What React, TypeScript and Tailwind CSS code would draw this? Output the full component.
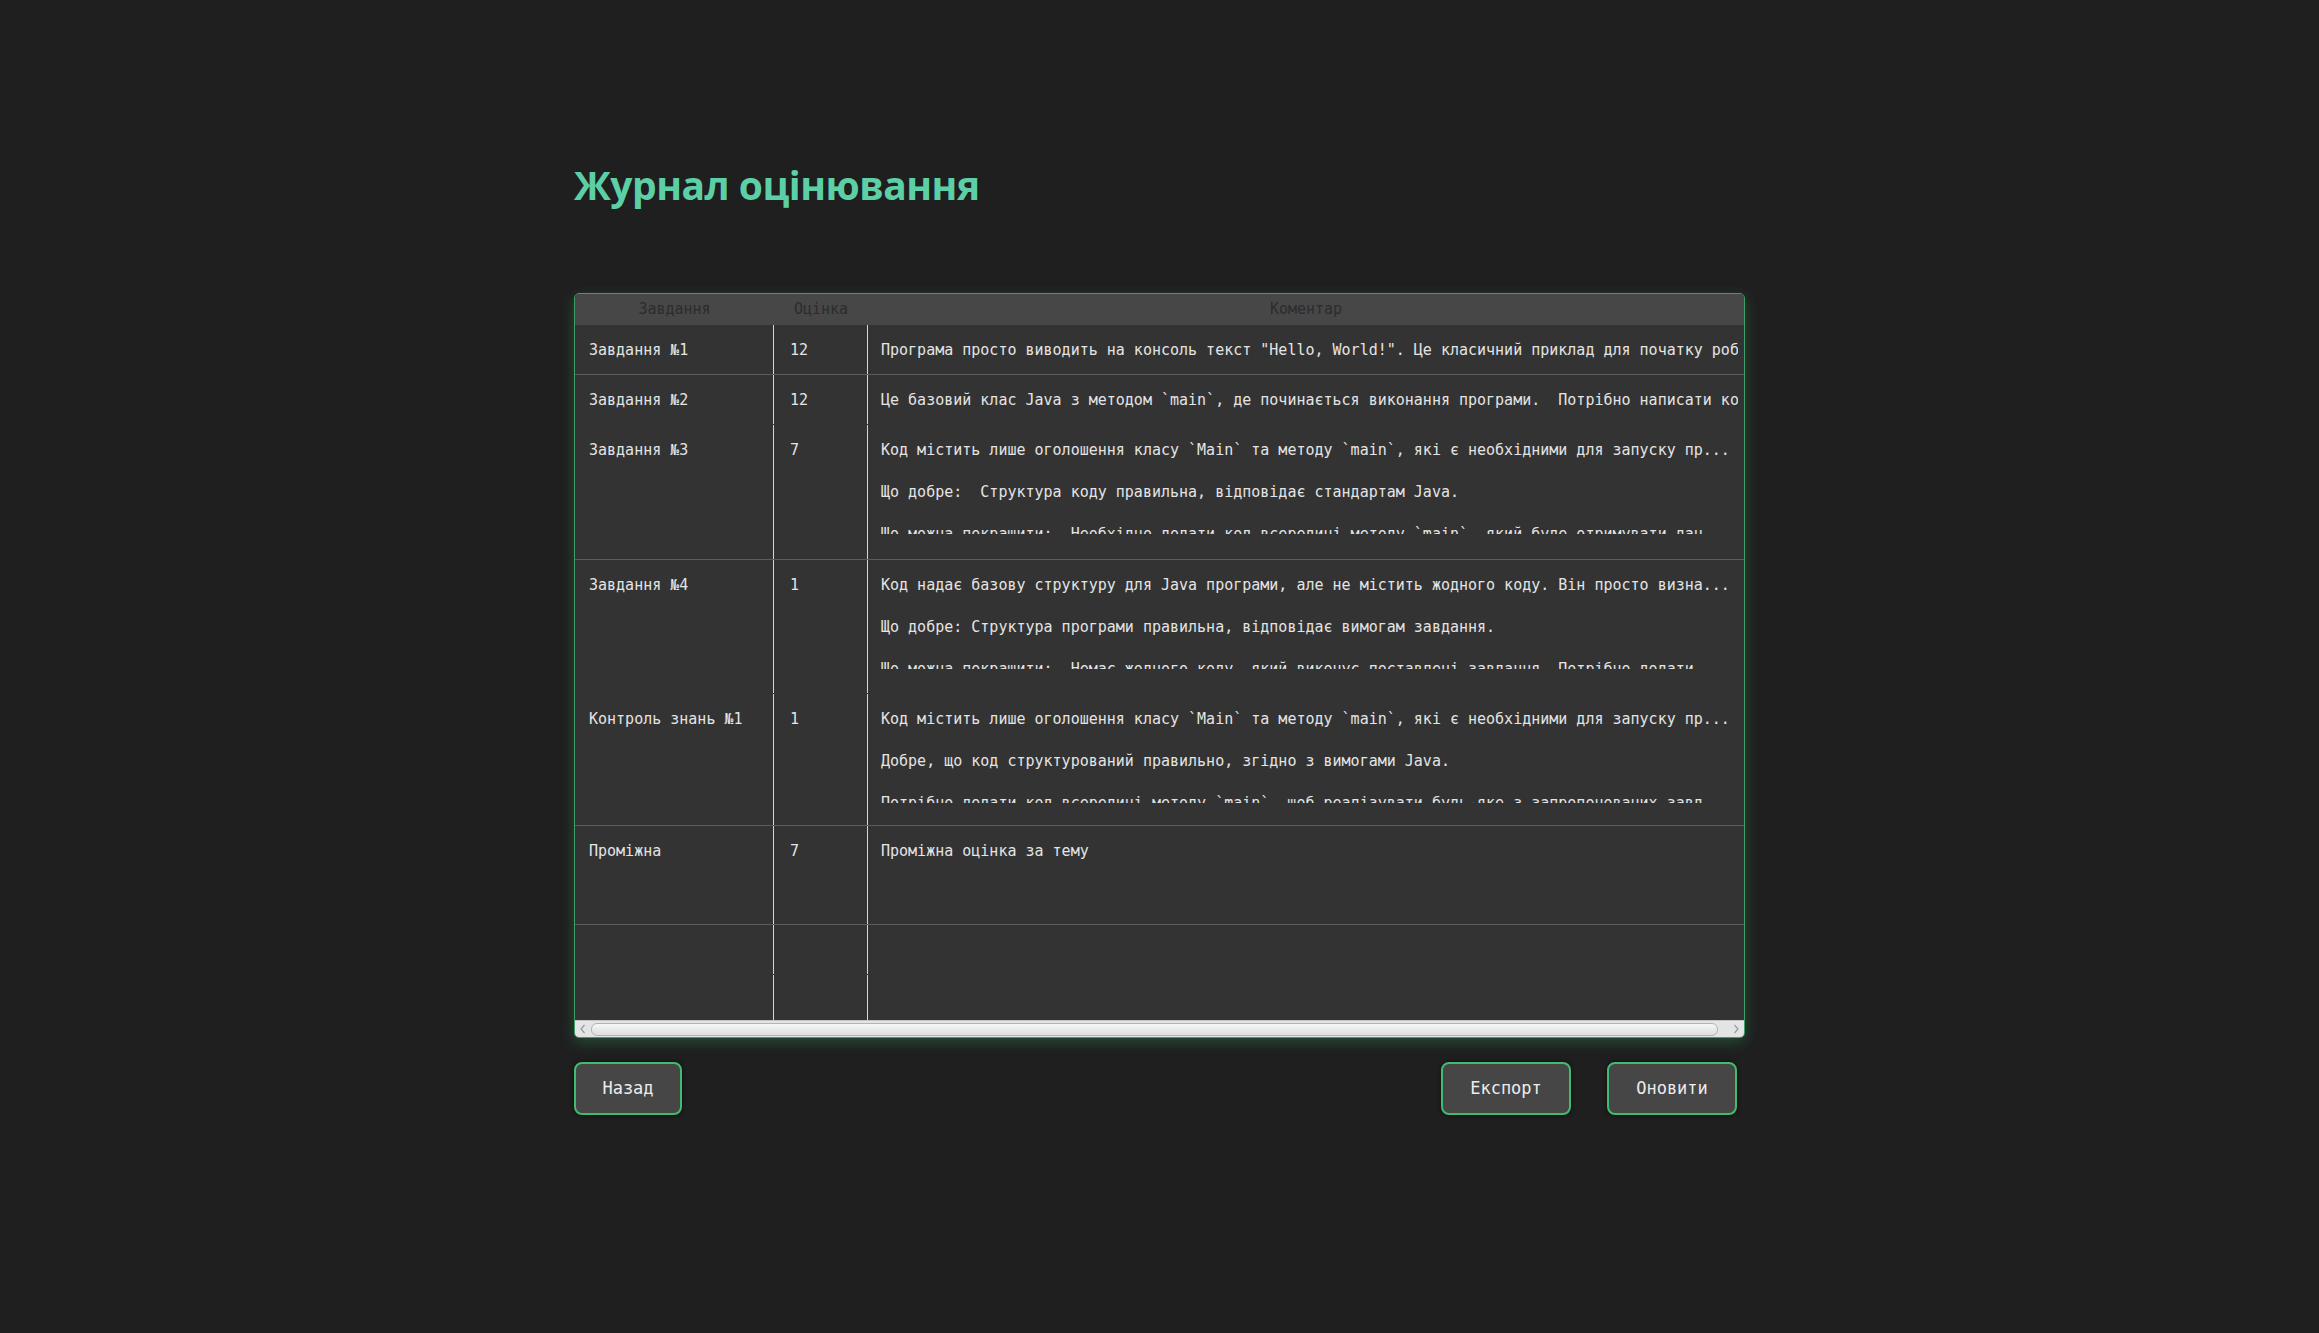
import React from 'react';

type Row = {
  name: string;
  score: string;
  lines: string[];
  height: string;
  separator: boolean;
};

const rows: Row[] = [
  {
    name: 'Завдання №1',
    score: '12',
    lines: ['Програма просто виводить на консоль текст "Hello, World!". Це класичний приклад для початку роботи з Java.'],
    height: 'h-[50px]',
    separator: true,
  },
  {
    name: 'Завдання №2',
    score: '12',
    lines: ['Це базовий клас Java з методом `main`, де починається виконання програми.  Потрібно написати код для завдань.'],
    height: 'h-[50px]',
    separator: false,
  },
  {
    name: 'Завдання №3',
    score: '7',
    lines: [
      'Код містить лише оголошення класу `Main` та методу `main`, які є необхідними для запуску пр...',
      'Що добре:  Структура коду правильна, відповідає стандартам Java.',
      'Що можна покращити:  Необхідно додати код всередині методу `main`, який буде отримувати дан...',
    ],
    height: 'h-[135px]',
    separator: true,
  },
  {
    name: 'Завдання №4',
    score: '1',
    lines: [
      'Код надає базову структуру для Java програми, але не містить жодного коду. Він просто визна...',
      'Що добре: Структура програми правильна, відповідає вимогам завдання.',
      'Що можна покращити:  Немає жодного коду, який виконує поставлені завдання. Потрібно додати ...',
    ],
    height: 'h-[134px]',
    separator: false,
  },
  {
    name: 'Контроль знань №1',
    score: '1',
    lines: [
      'Код містить лише оголошення класу `Main` та методу `main`, які є необхідними для запуску пр...',
      'Добре, що код структурований правильно, згідно з вимогами Java.',
      'Потрібно додати код всередині методу `main`, щоб реалізувати будь-яке з запропонованих завд...',
    ],
    height: 'h-[132px]',
    separator: true,
  },
  {
    name: 'Проміжна',
    score: '7',
    lines: ['Проміжна оцінка за тему'],
    height: 'h-[99px]',
    separator: true,
  },
  { name: '', score: '', lines: [], height: 'h-[50px]', separator: false },
  { name: '', score: '', lines: [], height: 'h-[50px]', separator: false },
];

function TableRow({ row }: { row: Row }) {
  return (
    <div
      className={`flex ${row.height} border-b ${row.separator ? 'border-[#5c5c5c]' : 'border-transparent'}`}
    >
      <div className="w-[199px] shrink-0 border-r border-[#d6d6d6] pl-[14px] pt-[15px]">{row.name}</div>
      <div className="w-[94px] shrink-0 border-r border-[#d6d6d6] pl-[16px] pt-[15px]">{row.score}</div>
      <div className="mr-[6px] min-w-0 flex-1 overflow-hidden pl-[13px] pt-[15px]">
        <div className="h-[94px] overflow-hidden whitespace-pre">
          {row.lines.map((line, i) => (
            <div key={i} className={i > 0 ? 'mt-[21px]' : ''}>
              {line}
            </div>
          ))}
        </div>
      </div>
    </div>
  );
}

function Scrollbar() {
  return (
    <div className="flex h-[17px] items-center border-t border-[#c4c4c4] bg-[#e4e4e4] px-[3px]">
      <svg width="10" height="12" viewBox="0 0 10 12" className="shrink-0">
        <path d="M6.5 2 L3 6 L6.5 10" fill="none" stroke="#9a9a9a" strokeWidth="1.2" />
      </svg>
      <div className="mx-[3px] h-[13px] flex-1 rounded-[6px] border border-[#b3b3b3] bg-gradient-to-b from-[#f7f7f7] to-[#dedede]" />
      <div className="w-[10px] shrink-0" />
      <svg width="10" height="12" viewBox="0 0 10 12" className="shrink-0">
        <path d="M3.5 2 L7 6 L3.5 10" fill="none" stroke="#9a9a9a" strokeWidth="1.2" />
      </svg>
    </div>
  );
}

function ActionButton({ label, width }: { label: string; width: string }) {
  return (
    <button
      className={`${width} h-[53px] rounded-[8px] border-2 border-[#3fbb74] bg-[#464646] text-[17px] text-[#ececec] shadow-[0_0_4px_rgba(0,0,0,0.6)]`}
    >
      {label}
    </button>
  );
}

export default function App() {
  return (
    <div className="min-h-screen bg-[#1f1f1f] font-['DejaVu_Sans_Mono',monospace]">
      <div className="mx-auto w-[1171px] pt-[165px]">
        <h1 className="font-['Open_Sans',sans-serif] text-[39px] font-bold leading-[40px] tracking-[-0.5px] text-[#5dcfa6]">
          Журнал оцінювання
        </h1>

        <div className="mt-[88px] overflow-hidden rounded-[5px] border border-[#3b9f66] bg-[#333333] shadow-[0_4px_14px_rgba(50,170,100,0.35)]">
          <div className="flex h-[31px] items-center bg-[#474747] text-[15px] text-[#2c2c2c]">
            <div className="w-[199px] shrink-0 text-center">Завдання</div>
            <div className="w-[94px] shrink-0 text-center">Оцінка</div>
            <div className="flex-1 text-center">Коментар</div>
          </div>

          <div className="h-[695px] overflow-hidden text-[15px] leading-[21px] text-[#e4e4e4]">
            {rows.map((row, i) => (
              <TableRow key={i} row={row} />
            ))}
          </div>

          <Scrollbar />
        </div>

        <div className="mt-[24px] flex items-center justify-between">
          <ActionButton label="Назад" width="w-[108px]" />
          <div className="flex gap-[36px] pr-[8px]">
            <ActionButton label="Експорт" width="w-[130px]" />
            <ActionButton label="Оновити" width="w-[130px]" />
          </div>
        </div>
      </div>
    </div>
  );
}
